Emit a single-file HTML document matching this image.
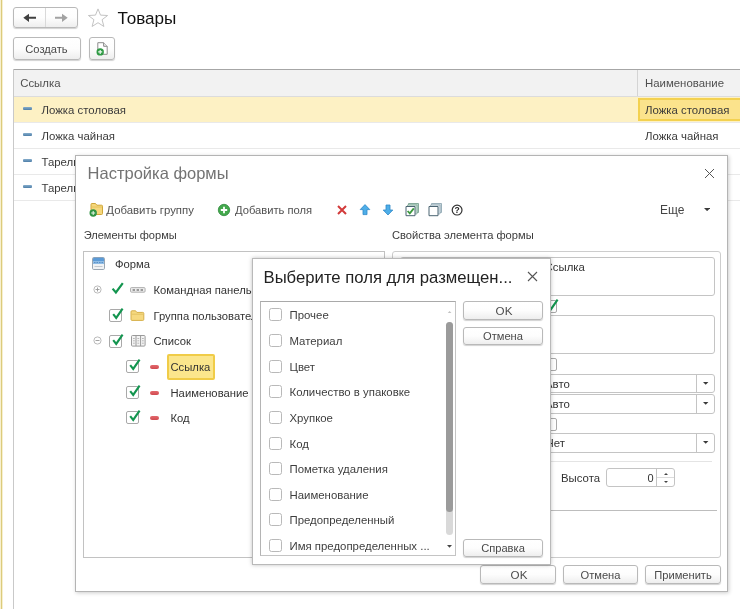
<!DOCTYPE html>
<html lang="ru">
<head>
<meta charset="utf-8">
<title>Товары</title>
<style>
*{box-sizing:border-box;margin:0;padding:0}
html,body{width:740px;height:609px;overflow:hidden;background:#fff}
body{font-family:"Liberation Sans",sans-serif;font-size:11.4px;color:#333;position:relative}
.abs{position:absolute}
.t{position:absolute;white-space:nowrap;line-height:14px;height:14px;margin-top:-7px}
.btn{position:absolute;font-size:11.15px;border:1px solid #b9b9b9;border-radius:3px;background:linear-gradient(#ffffff 0%,#fdfdfd 50%,#eeeeee 100%);box-shadow:0 1px 1px rgba(0,0,0,.18);text-align:center;color:#4a4a4a}
.btn span{display:block;position:absolute;left:0;right:0;top:50%;line-height:14px;margin-top:-7px;white-space:nowrap}
.cb{position:absolute;width:13px;height:13px;border:1px solid #a9a9a9;border-radius:2px;background:#fff}
.fld{position:absolute;border:1px solid #c4c4c4;border-radius:3px;background:#fff}
.panel{position:absolute;border:1px solid #c6c6c6;background:#fff}
</style>
</head>
<body>
<div id="root" style="position:absolute;left:0;top:0;width:740px;height:609px;will-change:transform">
<!-- left strip -->
<div class="abs" style="left:0;top:0;width:3px;height:609px;background:#f7f0cf"></div>
<div class="abs" style="left:1px;top:0;width:1px;height:609px;background:#dccb7c"></div>

<!-- nav buttons -->
<div class="btn" style="left:13px;top:7px;width:65px;height:21px"></div>
<div class="abs" style="left:45px;top:8px;width:1px;height:19px;background:#d9d9d9"></div>
<svg class="abs" style="left:13px;top:7px" width="65" height="21" viewBox="0 0 65 21">
  <path d="M10.3 10.8 L16 6.7 V9.8 H23 V11.8 H16 V14.9 Z" fill="#404040"/>
  <path d="M54.7 10.8 L49 6.7 V9.8 H42 V11.8 H49 V14.9 Z" fill="#a2a2a2"/>
</svg>
<!-- star -->
<svg class="abs" style="left:87px;top:7px" width="22" height="21" viewBox="0 0 22 21">
  <path d="M11 1.9 L13.5 8.1 L20.6 8.5 L15.1 12.7 L16.9 19.5 L11 15.7 L5.1 19.5 L6.9 12.7 L1.4 8.5 L8.5 8.1 Z" fill="#fff" stroke="#c2c2c2" stroke-width="1"/>
</svg>
<div class="t" style="left:117.6px;top:18.9px;font-size:17.1px;line-height:20px;height:20px;margin-top:-10px;color:#111">Товары</div>

<!-- create buttons -->
<div class="btn" style="left:13px;top:37px;width:68px;height:23px"><span style="margin-top:-7px;padding-right:1px">Создать</span></div>
<div class="btn" style="left:89px;top:37px;width:26px;height:23px"></div>
<svg class="abs" style="left:94px;top:40px" width="16" height="18" viewBox="0 0 16 18">
  <path d="M3.8 2.7 H9.6 L13.2 6.3 V14.3 H3.8 Z" fill="#fff" stroke="#8d8d8d" stroke-width="1"/>
  <path d="M9.6 2.7 V6.3 H13.2" fill="#e9e9e9" stroke="#8d8d8d" stroke-width="1"/>
  <circle cx="6.2" cy="11.9" r="3.7" fill="#2f9a44"/>
  <path d="M6.2 9.9 V13.9 M4.2 11.9 H8.2" stroke="#f2fbf3" stroke-width="1.1"/>
</svg>

<!-- table -->
<div class="abs" style="left:13px;top:69px;width:727px;height:28px;background:#f2f2f2;border-top:1px solid #a6a6a6;border-bottom:1px solid #dcdcdc"></div>
<div class="abs" style="left:13px;top:69px;width:1px;height:540px;background:#c9c9c9"></div>
<div class="abs" style="left:637px;top:70px;width:1px;height:26px;background:#d4d4d4"></div>
<div class="t" style="left:20.2px;top:82.6px;color:#505050">Ссылка</div>
<div class="t" style="left:645px;top:82.6px;color:#505050">Наименование</div>

<div class="abs" style="left:14px;top:97px;width:726px;height:25px;background:#fdf1c4"></div>
<div class="abs" style="left:638px;top:98px;width:105px;height:23px;background:#fbe38c;border:2px solid #f3d150"></div>
<div class="abs" style="left:14px;top:122px;width:726px;height:1px;background:#e9e9e9"></div>
<div class="abs" style="left:14px;top:148px;width:726px;height:1px;background:#e9e9e9"></div>
<div class="abs" style="left:14px;top:174px;width:726px;height:1px;background:#e9e9e9"></div>
<div class="abs" style="left:14px;top:200px;width:726px;height:1px;background:#e9e9e9"></div>

<div class="abs" style="left:22.8px;top:106.8px;width:9.2px;height:3.7px;background:linear-gradient(#86adcc,#4d7ea8);border-radius:1px"></div>
<div class="abs" style="left:22.8px;top:132.8px;width:9.2px;height:3.7px;background:linear-gradient(#86adcc,#4d7ea8);border-radius:1px"></div>
<div class="abs" style="left:22.8px;top:158.8px;width:9.2px;height:3.7px;background:linear-gradient(#86adcc,#4d7ea8);border-radius:1px"></div>
<div class="abs" style="left:22.8px;top:184.8px;width:9.2px;height:3.7px;background:linear-gradient(#86adcc,#4d7ea8);border-radius:1px"></div>
<div class="t" style="left:41.5px;top:109.5px;font-size:11.4px;color:#3a3a3a">Ложка столовая</div>
<div class="t" style="left:41.5px;top:135.5px;font-size:11.4px;color:#3a3a3a">Ложка чайная</div>
<div class="t" style="left:41.5px;top:161.5px;font-size:11.4px;color:#3a3a3a">Тарелка глубокая</div>
<div class="t" style="left:41.5px;top:187.5px;font-size:11.4px;color:#3a3a3a">Тарелка плоская</div>
<div class="t" style="left:645px;top:109.5px;font-size:11.4px;color:#3a3a3a">Ложка столовая</div>
<div class="t" style="left:645px;top:135.5px;font-size:11.4px;color:#3a3a3a">Ложка чайная</div>

<!-- main dialog -->
<div id="dlg" class="abs" style="left:75px;top:155px;width:653px;height:437px;background:#fff;border:1px solid #b4b4b4;box-shadow:1px 1px 4px rgba(0,0,0,.2)"></div>
<div class="t" style="left:87.6px;top:173.4px;font-size:16.5px;line-height:20px;height:20px;margin-top:-10px;color:#737373">Настройка формы</div>
<svg class="abs" style="left:704px;top:168px" width="11" height="11" viewBox="0 0 11 11"><path d="M1 1 L10 10 M10 1 L1 10" stroke="#555" stroke-width="1"/></svg>

<!-- toolbar -->
<svg class="abs" style="left:88px;top:202px" width="16" height="15" viewBox="0 0 16 15">
  <path d="M3 2.5 Q3 1.5 4 1.5 H7.5 L8.8 3.2 H13.5 Q14.5 3.2 14.5 4.2 V11.5 Q14.5 12.5 13.5 12.5 H3 Z" fill="#f5d77c" stroke="#cfa63a" stroke-width="1"/>
  <path d="M3.5 5 H14" stroke="#e6c35c" stroke-width="1"/>
  <circle cx="5.2" cy="11" r="3.7" fill="#2f9443"/>
  <path d="M5.2 9 V13 M3.2 11 H7.2" stroke="#e9f6ea" stroke-width="1"/>
</svg>
<div class="t" style="left:106.3px;top:210px;color:#505050">Добавить группу</div>
<svg class="abs" style="left:217.4px;top:203.1px" width="14" height="14" viewBox="0 0 14 14">
  <circle cx="7" cy="7" r="5.7" fill="#43a84c" stroke="#2f8a3c" stroke-width=".8"/>
  <path d="M7 3.8 V10.2 M3.8 7 H10.2" stroke="#fff" stroke-width="1.8"/>
</svg>
<div class="t" style="left:235px;top:210px;font-size:11.2px;color:#505050">Добавить поля</div>
<svg class="abs" style="left:336px;top:204px" width="12" height="12" viewBox="0 0 12 12"><path d="M2 2 L10 10 M10 2 L2 10" stroke="#d23a3a" stroke-width="2"/></svg>
<svg class="abs" style="left:359px;top:203px" width="12" height="14" viewBox="0 0 12 14"><path d="M6 1.6 L10.8 6.6 H8 V11.6 H4 V6.6 H1.2 Z" fill="#4eaee8" stroke="#2f88c8" stroke-width=".8" stroke-linejoin="round"/></svg>
<svg class="abs" style="left:382px;top:203px" width="12" height="14" viewBox="0 0 12 14"><path d="M6 12 L10.8 7 H8 V2 H4 V7 H1.2 Z" fill="#4eaee8" stroke="#2f88c8" stroke-width=".8" stroke-linejoin="round"/></svg>
<svg class="abs" style="left:404.5px;top:202px" width="15" height="15" viewBox="0 0 15 15">
  <path d="M3.5 1.5 H13.5 V10.5 H3.5 Z" fill="#b3d3c4" stroke="#86ab9c" stroke-width="1"/>
  <path d="M2.5 3 H12 V12 H2.5 Z" fill="#cfe3da" stroke="#86ab9c" stroke-width=".8"/>
  <path d="M1 4.5 H10 V13.7 H1 Z" fill="#fff" stroke="#4b6472" stroke-width="1"/>
  <path d="M2.6 9 L4.8 11.4 L8.8 6.4" fill="none" stroke="#3c9a3f" stroke-width="1.8"/>
</svg>
<svg class="abs" style="left:427.5px;top:202px" width="15" height="15" viewBox="0 0 15 15">
  <path d="M3.5 1.5 H13.5 V10.5 H3.5 Z" fill="#c3d3da" stroke="#9ab0ba" stroke-width="1"/>
  <path d="M2.5 3 H12 V12 H2.5 Z" fill="#dbe5ea" stroke="#9ab0ba" stroke-width=".8"/>
  <path d="M1 4.5 H10 V13.7 H1 Z" fill="#fff" stroke="#4b6472" stroke-width="1"/>
</svg>
<svg class="abs" style="left:451px;top:203.7px" width="12" height="12" viewBox="0 0 12 12">
  <circle cx="6.1" cy="6.1" r="4.9" fill="#fff" stroke="#333" stroke-width="1.2"/>
  <text x="6.1" y="9.1" font-size="8.5" font-weight="bold" text-anchor="middle" fill="#222" font-family="Liberation Sans, sans-serif">?</text>
</svg>
<div class="t" style="left:660px;top:210px;font-size:12px;color:#444">Еще</div>
<svg class="abs" style="left:703.9px;top:208.3px" width="6.2" height="3.2" viewBox="0 0 6.20 3.20"><polygon points="0,0 6.20,0 3.10,3.20" fill="#3a3a3a"/></svg>

<div class="t" style="left:83.7px;top:235px;font-size:11.05px;color:#3c3c3c">Элементы формы</div>
<div class="t" style="left:392px;top:235px;font-size:11.15px;color:#3c3c3c">Свойства элемента формы</div>

<!-- tree panel -->
<div class="panel" style="left:83px;top:251px;width:302px;height:307px;border-color:#c2c2c2"></div>
<!-- Форма -->
<svg class="abs" style="left:92px;top:257px" width="13" height="13" viewBox="0 0 13 13">
  <rect x=".5" y=".5" width="12" height="12" rx="1.2" fill="#f1f3f5" stroke="#9aa6b2"/>
  <path d="M1 1.5 Q1 .8 1.8 .8 H11.2 Q12 .8 12 1.5 V4 H1 Z" fill="#5b9ad6"/>
  <rect x="1" y="4" width="11" height="3" fill="#8fbde6"/>
  <path d="M2 5.5 H11" stroke="#5b8fc4" stroke-width="1" stroke-dasharray="1.5 1"/>
  <path d="M2.5 9.5 H10.5" stroke="#c3c9cf" stroke-width="1"/>
</svg>
<div class="t" style="left:115px;top:264px;font-size:11.25px">Форма</div>
<!-- Командная панель -->
<svg class="abs" style="left:93.4px;top:285.3px" width="9" height="9" viewBox="0 0 9 9"><circle cx="4.5" cy="4.5" r="3.6" fill="#fff" stroke="#b2b2b2" stroke-width=".9"/><path d="M2.5 4.5 H6.5 M4.5 2.5 V6.5" stroke="#999" stroke-width=".9"/></svg>
<svg class="abs" style="left:111px;top:281px" width="14" height="14" viewBox="0 0 14 14"><path d="M1.6 7.6 L4.9 11.4 L11.8 2.2" fill="none" stroke="#13954f" stroke-width="2.2"/></svg>
<svg class="abs" style="left:130px;top:287px" width="16" height="6" viewBox="0 0 16 6"><rect x=".5" y=".6" width="14.6" height="4.6" rx="1" fill="#ececec" stroke="#a9a9a9" stroke-width=".9"/><path d="M2.6 2 H5 V3.9 H2.6 Z M6.6 2 H9 V3.9 H6.6 Z M10.6 2 H13 V3.9 H10.6 Z" fill="#9a9a9a"/></svg>
<div class="t" style="left:153.5px;top:290px;font-size:11.25px">Командная панель</div>
<!-- Группа -->
<div class="cb" style="left:109px;top:309px"></div>
<svg class="abs" style="left:110px;top:307px" width="15" height="14" viewBox="0 0 15 14"><path d="M3.2 7.2 L6.2 10.9 L12.6 1.6" fill="none" stroke="#13954f" stroke-width="2.1"/></svg>
<svg class="abs" style="left:130.4px;top:309px" width="15" height="13" viewBox="0 0 15 13"><path d="M1 2.8 Q1 1.8 2 1.8 H5.6 L6.8 3.4 H12.8 Q13.8 3.4 13.8 4.4 V10.4 Q13.8 11.4 12.8 11.4 H2 Q1 11.4 1 10.4 Z" fill="#f6d980" stroke="#d6b04a" stroke-width="1"/><path d="M1.5 5.2 H13.3" stroke="#e3c263" stroke-width="1"/></svg>
<div class="t" style="left:153.5px;top:316px;font-size:11.25px">Группа пользовательских настроек</div>
<!-- Список -->
<svg class="abs" style="left:93.4px;top:336.2px" width="9" height="9" viewBox="0 0 9 9"><circle cx="4.5" cy="4.5" r="3.6" fill="#fff" stroke="#b2b2b2" stroke-width=".9"/><path d="M2.5 4.5 H6.5" stroke="#999" stroke-width=".9"/></svg>
<div class="cb" style="left:109px;top:335px"></div>
<svg class="abs" style="left:110px;top:333px" width="15" height="14" viewBox="0 0 15 14"><path d="M3.2 7.2 L6.2 10.9 L12.6 1.6" fill="none" stroke="#13954f" stroke-width="2.1"/></svg>
<svg class="abs" style="left:130.6px;top:335px" width="15" height="12" viewBox="0 0 15 12"><rect x=".5" y=".5" width="13.6" height="10.6" rx="1" fill="#f4f4f4" stroke="#9a9a9a"/><path d="M5 1 V11 M9.6 1 V11" stroke="#9a9a9a"/><path d="M2 3.5 H3.8 M6.4 3.5 H8.2 M11 3.5 H12.8 M2 5.8 H3.8 M6.4 5.8 H8.2 M11 5.8 H12.8 M2 8.2 H3.8 M6.4 8.2 H8.2 M11 8.2 H12.8" stroke="#b8b8b8"/></svg>
<div class="t" style="left:153.5px;top:341px;font-size:11.25px">Список</div>
<!-- Ссылка -->
<div class="cb" style="left:126px;top:360px"></div>
<svg class="abs" style="left:127px;top:358px" width="15" height="14" viewBox="0 0 15 14"><path d="M3.2 7.2 L6.2 10.9 L12.6 1.6" fill="none" stroke="#13954f" stroke-width="2.1"/></svg>
<div class="abs" style="left:150px;top:365px;width:9px;height:3.6px;background:linear-gradient(#e2686c,#d14a50);border-radius:2px"></div>
<div class="abs" style="left:167px;top:354px;width:48px;height:26px;background:#fbe68c;border:2px solid #f0cc48;border-radius:2px"></div>
<div class="t" style="left:170.5px;top:367px;font-size:11.25px">Ссылка</div>
<!-- Наименование -->
<div class="cb" style="left:126px;top:386px"></div>
<svg class="abs" style="left:127px;top:384px" width="15" height="14" viewBox="0 0 15 14"><path d="M3.2 7.2 L6.2 10.9 L12.6 1.6" fill="none" stroke="#13954f" stroke-width="2.1"/></svg>
<div class="abs" style="left:150px;top:391px;width:9px;height:3.6px;background:linear-gradient(#e2686c,#d14a50);border-radius:2px"></div>
<div class="t" style="left:170.5px;top:393px;font-size:11.25px">Наименование</div>
<!-- Код -->
<div class="cb" style="left:126px;top:411px"></div>
<svg class="abs" style="left:127px;top:409px" width="15" height="14" viewBox="0 0 15 14"><path d="M3.2 7.2 L6.2 10.9 L12.6 1.6" fill="none" stroke="#13954f" stroke-width="2.1"/></svg>
<div class="abs" style="left:150px;top:416px;width:9px;height:3.6px;background:linear-gradient(#e2686c,#d14a50);border-radius:2px"></div>
<div class="t" style="left:170.5px;top:418px;font-size:11.25px">Код</div>

<!-- right panel -->
<div class="panel" style="left:392px;top:251px;width:328.5px;height:307px;border-color:#cdcdcd;border-radius:3px"></div>
<div class="fld" style="left:400px;top:257px;width:315px;height:38.6px"></div>
<div class="t" style="left:544.6px;top:267px">Ссылка</div>
<div class="cb" style="left:543.8px;top:299.8px"></div>
<svg class="abs" style="left:544.8px;top:297.6px" width="15" height="14" viewBox="0 0 15 14"><path d="M3.2 7.2 L6.2 10.9 L12.6 1.6" fill="none" stroke="#13954f" stroke-width="2.1"/></svg>
<div class="fld" style="left:400px;top:315px;width:315px;height:39px"></div>
<div class="cb" style="left:543.8px;top:358px"></div>
<div class="fld" style="left:400px;top:374px;width:315px;height:19.4px"></div>
<div class="abs" style="left:696px;top:375px;width:1px;height:18px;background:#c4c4c4"></div>
<svg class="abs" style="left:703.2px;top:382.3px" width="5.4" height="2.9" viewBox="0 0 5.80 3.00"><polygon points="0,0 5.80,0 2.90,3.00" fill="#3a3a3a"/></svg>
<div class="t" style="left:545px;top:384px">Авто</div>
<div class="fld" style="left:400px;top:394px;width:315px;height:19.6px"></div>
<div class="abs" style="left:696px;top:395px;width:1px;height:18px;background:#c4c4c4"></div>
<svg class="abs" style="left:703.2px;top:402.3px" width="5.4" height="2.9" viewBox="0 0 5.80 3.00"><polygon points="0,0 5.80,0 2.90,3.00" fill="#3a3a3a"/></svg>
<div class="t" style="left:545px;top:404px">Авто</div>
<div class="cb" style="left:543.8px;top:418px"></div>
<div class="fld" style="left:400px;top:433px;width:315px;height:19.8px"></div>
<div class="abs" style="left:696px;top:434px;width:1px;height:18px;background:#c4c4c4"></div>
<svg class="abs" style="left:703.2px;top:441.3px" width="5.4" height="2.9" viewBox="0 0 5.80 3.00"><polygon points="0,0 5.80,0 2.90,3.00" fill="#3a3a3a"/></svg>
<div class="t" style="left:545.5px;top:443.3px">Нет</div>
<div class="abs" style="left:400px;top:461px;width:312px;height:1px;background:#e4e4e4"></div>
<div class="t" style="left:561px;top:477.5px">Высота</div>
<div class="fld" style="left:606px;top:468px;width:69px;height:19px"></div>
<div class="abs" style="left:656px;top:469px;width:1px;height:17px;background:#c4c4c4"></div>
<div class="t" style="left:647.6px;top:478px;font-size:11px">0</div>
<div class="abs" style="left:657px;top:477px;width:17px;height:1px;background:#dcdcdc"></div>
<svg class="abs" style="left:664.0px;top:473.0px" width="4.0" height="2.0" viewBox="0 0 4.00 2.00"><polygon points="0,2.00 4.00,2.00 2.00,0" fill="#444"/></svg>
<svg class="abs" style="left:664.0px;top:481.0px" width="4.0" height="2.0" viewBox="0 0 4.00 2.00"><polygon points="0,0 4.00,0 2.00,2.00" fill="#444"/></svg>
<div class="abs" style="left:400px;top:510px;width:317px;height:1px;background:#bdbdbd"></div>

<!-- dialog buttons -->
<div class="btn" style="left:480px;top:565px;width:76px;height:19px;font-size:11.15px"><span style="font-size:11.6px;padding-left:2px">OK</span></div>
<div class="btn" style="left:563px;top:565px;width:75px;height:19px;font-size:11.15px"><span>Отмена</span></div>
<div class="btn" style="left:645px;top:565px;width:76px;height:19px;font-size:11.15px"><span>Применить</span></div>

<!-- popup -->
<div class="abs" style="left:252px;top:258px;width:299px;height:307px;background:#fff;border:1px solid #b9b9b9;box-shadow:0 0 4px rgba(0,0,0,.25)"></div>
<div class="t" style="left:263.5px;top:277.6px;font-size:16.7px;line-height:20px;height:20px;margin-top:-10px;color:#222">Выберите поля для размещен...</div>
<svg class="abs" style="left:527px;top:271px" width="11" height="11" viewBox="0 0 11 11"><path d="M1 1 L10 10 M10 1 L1 10" stroke="#555" stroke-width="1.1"/></svg>
<div class="panel" style="left:260px;top:301px;width:196.4px;height:255px;border-color:#a9a9a9 #c4c4c4 #c4c4c4 #b4b4b4"></div>
<div class="abs" style="left:446px;top:322px;width:7px;height:213px;border-radius:3.5px;background:#d9d9d9"></div>
<div class="abs" style="left:446px;top:322px;width:7px;height:190px;border-radius:3.5px;background:#9b9b9b"></div>
<svg class="abs" style="left:446.8px;top:310.6px" width="5.2" height="2.8" viewBox="0 0 5.20 2.80"><polygon points="0,2.80 5.20,2.80 2.60,0" fill="#c2c2c2"/></svg>
<svg class="abs" style="left:446.9px;top:544.8px" width="5.0" height="2.8" viewBox="0 0 5.00 2.80"><polygon points="0,0 5.00,0 2.50,2.80" fill="#444"/></svg>

<div class="cb" style="left:268.7px;top:308.4px;border-color:#b9b9b9;border-radius:2.5px"></div><div class="t" style="left:289.5px;top:315px;color:#3e3e3e">Прочее</div>
<div class="cb" style="left:268.7px;top:334.4px;border-color:#b9b9b9;border-radius:2.5px"></div><div class="t" style="left:289.5px;top:341px;color:#3e3e3e">Материал</div>
<div class="cb" style="left:268.7px;top:360.4px;border-color:#b9b9b9;border-radius:2.5px"></div><div class="t" style="left:289.5px;top:367px;color:#3e3e3e">Цвет</div>
<div class="cb" style="left:268.7px;top:385.4px;border-color:#b9b9b9;border-radius:2.5px"></div><div class="t" style="left:289.5px;top:392px;color:#3e3e3e">Количество в упаковке</div>
<div class="cb" style="left:268.7px;top:411.4px;border-color:#b9b9b9;border-radius:2.5px"></div><div class="t" style="left:289.5px;top:418px;color:#3e3e3e">Хрупкое</div>
<div class="cb" style="left:268.7px;top:437.4px;border-color:#b9b9b9;border-radius:2.5px"></div><div class="t" style="left:289.5px;top:443.5px;color:#3e3e3e">Код</div>
<div class="cb" style="left:268.7px;top:462.4px;border-color:#b9b9b9;border-radius:2.5px"></div><div class="t" style="left:289.5px;top:469px;color:#3e3e3e">Пометка удаления</div>
<div class="cb" style="left:268.7px;top:488.4px;border-color:#b9b9b9;border-radius:2.5px"></div><div class="t" style="left:289.5px;top:494.5px;color:#3e3e3e">Наименование</div>
<div class="cb" style="left:268.7px;top:513.4px;border-color:#b9b9b9;border-radius:2.5px"></div><div class="t" style="left:289.5px;top:520px;color:#3e3e3e">Предопределенный</div>
<div class="cb" style="left:268.7px;top:539.4px;border-color:#b9b9b9;border-radius:2.5px"></div><div class="t" style="left:289.5px;top:546px;color:#3e3e3e">Имя предопределенных ...</div>

<div class="btn" style="left:463px;top:301px;width:80px;height:19px;font-size:11.15px"><span style="font-size:11.6px;padding-left:2px">OK</span></div>
<div class="btn" style="left:463px;top:327px;width:80px;height:18px;font-size:11.15px"><span>Отмена</span></div>
<div class="btn" style="left:463px;top:539px;width:80px;height:18px;font-size:11.15px"><span>Справка</span></div>
</div>
</body>
</html>
